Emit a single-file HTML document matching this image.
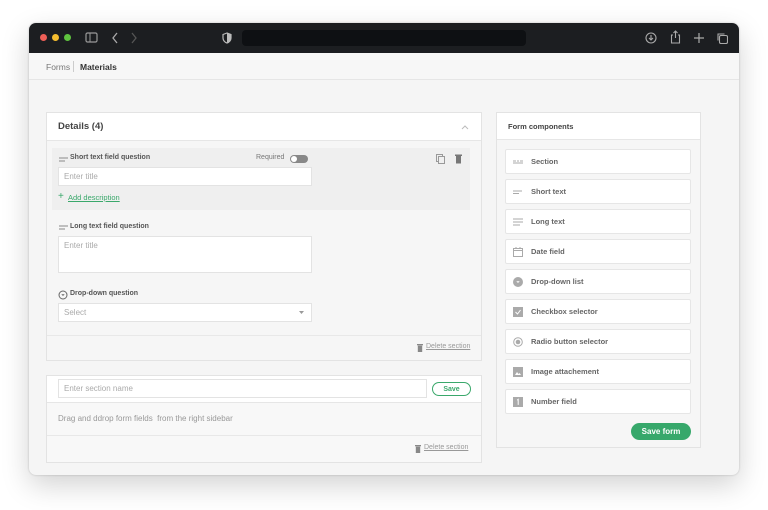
<!DOCTYPE html>
<html><head><meta charset="utf-8"><style>
*{box-sizing:border-box;margin:0;padding:0}
svg{display:block}
body{width:768px;height:510px;background:#fff;font-family:"Liberation Sans",sans-serif;position:relative;overflow:hidden}
.a{position:absolute}
.win{left:29px;top:23px;width:710px;height:452px;border-radius:7px;background:#f5f5f5;box-shadow:0 10px 28px rgba(0,0,0,.18),0 0 2px rgba(0,0,0,.2);overflow:hidden}
.bar{left:0;top:0;width:710px;height:30px;background:#1c1e21}
.dot{width:7px;height:7px;border-radius:50%;top:11px}
.crumb{left:0;top:30px;width:710px;height:27px;background:#f7f7f7;border-bottom:1px solid #e6e6e6;font-size:8px;color:#777}
.card{background:#f6f6f6;border:1px solid #e3e3e3}
.hd{background:#fff;border-bottom:1px solid #e6e6e6}
.lbl{font-size:7px;font-weight:bold;color:#555}
.inp{background:#fff;border:1px solid #e3e3e3;font-size:8px;color:#aaa;padding:0 5px}
.item{left:8px;width:186px;height:25px;background:#fff;border:1px solid #e6e6e6;border-radius:2px;font-size:7.5px;font-weight:bold;color:#666}
.item span{position:absolute;left:25px;top:7px}
.item svg{position:absolute;left:7px;top:7px}
.del{font-size:7px;color:#999;text-decoration:underline}
</style></head><body>
<div class="a win">
 <div class="a bar">
  <div class="a dot" style="left:11px;background:#ee5f57"></div>
  <div class="a dot" style="left:23px;background:#f5bd2f"></div>
  <div class="a dot" style="left:35px;background:#5fc33f"></div>
  <svg class="a" style="left:56px;top:9px" width="13" height="11"><rect x="1" y="1" width="11" height="9" rx="1.5" fill="none" stroke="#999" stroke-width="1.2"/><line x1="5" y1="1" x2="5" y2="10" stroke="#999"/></svg>
  <svg class="a" style="left:82px;top:9px" width="8" height="12"><path d="M6 1L2 6l4 5" fill="none" stroke="#aaa" stroke-width="1.3"/></svg>
  <svg class="a" style="left:101px;top:9px" width="8" height="12"><path d="M2 1l4 5-4 5" fill="none" stroke="#555" stroke-width="1.3"/></svg>
  <svg class="a" style="left:193px;top:9px" width="10" height="12"><path d="M5 1L1 2.5v3.5c0 2.5 2 4.5 4 5 2-.5 4-2.5 4-5V2.5z" fill="none" stroke="#bbb" stroke-width="1.2"/><path d="M5 1v10c2-.5 4-2.5 4-5V2.5z" fill="#bbb"/></svg>
  <div class="a" style="left:213px;top:7px;width:284px;height:16px;border-radius:4px;background:#0e1013"></div>
  <svg class="a" style="left:616px;top:9px" width="12" height="12"><circle cx="6" cy="6" r="5" fill="none" stroke="#aaa" stroke-width="1.1"/><path d="M6 3v5M4 6l2 2 2-2" fill="none" stroke="#aaa" stroke-width="1.1"/></svg>
  <svg class="a" style="left:641px;top:7px" width="11" height="14"><path d="M3 5H1.5v8h8V5H8M5.5 1v7M3.5 3l2-2 2 2" fill="none" stroke="#aaa" stroke-width="1.1"/></svg>
  <svg class="a" style="left:665px;top:10px" width="10" height="10"><path d="M5 0v10M0 5h10" stroke="#aaa" stroke-width="1.2"/></svg>
  <svg class="a" style="left:687px;top:9px" width="12" height="12"><rect x="3.5" y="3.5" width="8" height="8" rx="1.5" fill="none" stroke="#aaa" stroke-width="1.1"/><path d="M2 8.5V2h6.5" fill="none" stroke="#aaa" stroke-width="1.1"/></svg>
 </div>
 <div class="a crumb"><span class="a" style="left:17px;top:9px;font-size:8.5px">Forms</span><span class="a" style="left:44px;top:8px;width:1px;height:11px;background:#ccc"></span><span class="a" style="left:51px;top:9px;font-weight:bold;color:#333;font-size:8.5px">Materials</span></div>

 <div class="a card" style="left:17px;top:89px;width:436px;height:249px">
  <div class="a hd" style="left:0;top:0;width:434px;height:28px"><span class="a" style="left:11px;top:8px;font-size:9.5px;font-weight:bold;color:#444">Details (4)</span>
   <svg class="a" style="left:414px;top:11px" width="8" height="6"><path d="M1 5l3-3 3 3" fill="none" stroke="#bbb" stroke-width="1"/></svg></div>
  <div class="a" style="left:5px;top:35px;width:418px;height:62px;background:#efefef"></div>
  <svg class="a" style="left:12px;top:44px" width="9" height="5"><path d="M0 1h9M0 4h6" stroke="#888" stroke-width="1"/></svg>
  <span class="a lbl" style="left:23px;top:41px">Short text field question</span>
  <span class="a" style="left:209px;top:41px;font-size:7px;color:#777">Required</span>
  <div class="a" style="left:243px;top:42px;width:18px;height:8px;border-radius:4px;background:#888"><div class="a" style="left:1px;top:1px;width:6px;height:6px;border-radius:50%;background:#fff"></div></div>
  <svg class="a" style="left:389px;top:41px" width="9" height="10"><rect x="0.5" y="0.5" width="6" height="7" fill="none" stroke="#999"/><rect x="2.5" y="2.5" width="6" height="7" fill="#efefef" stroke="#999"/></svg>
  <svg class="a" style="left:408px;top:41px" width="7" height="10"><rect x="0" y="0.5" width="7" height="1.5" fill="#777"/><rect x="1" y="2" width="5" height="7.5" fill="#777"/></svg>
  <div class="a inp" style="left:11px;top:54px;width:254px;height:19px;line-height:17px">Enter title</div>
  <span class="a" style="left:11px;top:78px;font-size:10px;color:#3aa86b">+</span>
  <span class="a" style="left:21px;top:80px;font-size:7.5px;color:#3aa86b;text-decoration:underline">Add description</span>
  <svg class="a" style="left:12px;top:112px" width="9" height="5"><path d="M0 1h9M0 4h6" stroke="#888" stroke-width="1"/></svg>
  <span class="a lbl" style="left:23px;top:110px">Long text field question</span>
  <div class="a inp" style="left:11px;top:123px;width:254px;height:37px;padding-top:4px">Enter title</div>
  <svg class="a" style="left:11px;top:177px" width="10" height="10"><circle cx="5" cy="5" r="4" fill="none" stroke="#666" stroke-width="1"/><path d="M3.3 4.3h3.4L5 6z" fill="#666"/></svg>
  <span class="a lbl" style="left:23px;top:177px">Drop-down question</span>
  <div class="a inp" style="left:11px;top:190px;width:254px;height:19px;line-height:17px">Select<svg class="a" style="left:240px;top:7px" width="6" height="4"><path d="M0 0h5L2.5 3z" fill="#999"/></svg></div>
  <div class="a" style="left:0;top:222px;width:434px;height:1px;background:#e8e8e8"></div>
  <svg class="a" style="left:370px;top:231px" width="6" height="8"><rect x="0" y="0" width="6" height="1.3" fill="#888"/><rect x="0.8" y="1.6" width="4.4" height="6.4" fill="#888"/></svg>
  <span class="a del" style="left:379px;top:230px">Delete section</span>
 </div>

 <div class="a card" style="left:17px;top:352px;width:436px;height:88px;background:#f8f8f8">
  <div class="a" style="left:0;top:0;width:434px;height:27px;background:#fff;border-bottom:1px solid #e6e6e6"></div>
  <div class="a inp" style="left:11px;top:3px;width:369px;height:19px;line-height:17px">Enter section name</div>
  <div class="a" style="left:385px;top:6px;width:39px;height:14px;border:1.2px solid #3aa86b;border-radius:8px;font-size:7px;font-weight:bold;color:#3aa86b;display:flex;align-items:center;justify-content:center">Save</div>
  <span class="a" style="left:11px;top:38px;font-size:8px;color:#999">Drag and ddrop form fields&nbsp; from the right sidebar</span>
  <div class="a" style="left:0;top:59px;width:434px;height:1px;background:#e8e8e8"></div>
  <svg class="a" style="left:368px;top:69px" width="6" height="8"><rect x="0" y="0" width="6" height="1.3" fill="#888"/><rect x="0.8" y="1.6" width="4.4" height="6.4" fill="#888"/></svg>
  <span class="a del" style="left:377px;top:68px">Delete section</span>
 </div>

 <div class="a card" style="left:467px;top:89px;width:205px;height:336px">
  <div class="a hd" style="left:0;top:0;width:203px;height:27px"><span class="a" style="left:11px;top:9px;font-size:7.5px;font-weight:bold;color:#444">Form components</span></div>
  <div class="a item" style="top:36px"><svg width="10" height="10"><path d="M0 4h3M4 4h2M7 4h3M0 6h10" stroke="#aaa" stroke-width="0.9"/></svg><span>Section</span></div>
  <div class="a item" style="top:66px"><svg width="10" height="10"><path d="M0 4h9M0 6.5h6" stroke="#aaa" stroke-width="0.9"/></svg><span>Short text</span></div>
  <div class="a item" style="top:96px"><svg width="10" height="10"><path d="M0 2h10M0 5h10M0 8h7" stroke="#aaa" stroke-width="0.9"/></svg><span>Long text</span></div>
  <div class="a item" style="top:126px"><svg width="10" height="10"><rect x="0.5" y="1.5" width="9" height="8" fill="none" stroke="#aaa"/><path d="M0.5 3.5h9M3 0v2M7 0v2" stroke="#aaa"/></svg><span>Date field</span></div>
  <div class="a item" style="top:156px"><svg width="10" height="10"><circle cx="5" cy="5" r="5" fill="#aaa"/><path d="M3.3 4.3h3.4L5 6z" fill="#fff"/></svg><span>Drop-down list</span></div>
  <div class="a item" style="top:186px"><svg width="10" height="10"><rect width="10" height="10" fill="#aaa"/><path d="M2.5 5l2 2 3-4" fill="none" stroke="#fff" stroke-width="1"/></svg><span>Checkbox selector</span></div>
  <div class="a item" style="top:216px"><svg width="10" height="10"><circle cx="5" cy="5" r="4.3" fill="none" stroke="#aaa"/><circle cx="5" cy="5" r="2.3" fill="#aaa"/></svg><span>Radio button selector</span></div>
  <div class="a item" style="top:246px"><svg width="10" height="10"><rect width="10" height="10" fill="#aaa"/><path d="M2 8l2-3 1.5 2 1-1 1.5 2z" fill="#fff"/></svg><span>Image attachement</span></div>
  <div class="a item" style="top:276px"><svg width="10" height="10"><rect width="10" height="10" fill="#aaa"/><path d="M4.2 3.2l1-.8v5.5" fill="none" stroke="#fff" stroke-width="1"/></svg><span>Number field</span></div>
  <div class="a" style="left:134px;top:310px;width:60px;height:17px;border-radius:9px;background:#37a86b;color:#fff;font-size:8px;font-weight:bold;display:flex;align-items:center;justify-content:center">Save form</div>
 </div>
</div>
</body></html>
